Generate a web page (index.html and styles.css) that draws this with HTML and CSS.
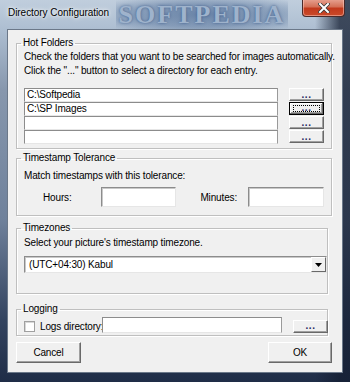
FILE: index.html
```html
<!DOCTYPE html>
<html lang="en">
<head>
  <meta charset="UTF-8">
  <title>Directory Configuration</title>
  <link rel="stylesheet" href="styles.css">
</head>
<body>

  <div class="window">

    <!-- Title bar -->
    <div class="titlebar">
      <span class="title">Directory Configuration</span>
      <span class="watermark">SOFTPEDIA</span>
      <button class="close" aria-label="Close">
        <svg width="12" height="10" viewBox="0 0 12 10">
          <path d="M2 1 L10 9 M10 1 L2 9" stroke="#3a3a3a" stroke-width="3.6" stroke-linecap="square"/>
          <path d="M2 1 L10 9 M10 1 L2 9" stroke="#fff" stroke-width="2" stroke-linecap="square"/>
        </svg>
      </button>
    </div>

    <div class="client">

      <!-- Hot Folders -->
      <fieldset class="group hot">
        <legend>Hot Folders</legend>
        <p class="note">Check the folders that you want to be searched for images automatically.<br>Click the "..." button to select a directory for each entry.</p>
        <div class="folder-list">
          <div class="folder-row"><div class="field">C:\Softpedia</div><button class="browse">...</button></div>
          <div class="folder-row"><div class="field">C:\SP Images</div><button class="browse focused"><span>...</span></button></div>
          <div class="folder-row"><div class="field"></div><button class="browse">...</button></div>
          <div class="folder-row"><div class="field"></div><button class="browse">...</button></div>
        </div>
      </fieldset>

      <!-- Timestamp Tolerance -->
      <fieldset class="group tolerance">
        <legend>Timestamp Tolerance</legend>
        <p class="note">Match timestamps with this tolerance:</p>
        <div class="tolerance-row">
          <label class="hours-label">Hours:</label>
          <div class="field tall hours"></div>
          <label class="minutes-label">Minutes:</label>
          <div class="field tall minutes"></div>
        </div>
      </fieldset>

      <!-- Timezones -->
      <fieldset class="group narrow zones">
        <legend>Timezones</legend>
        <p class="note">Select your picture's timestamp timezone.</p>
        <div class="dropdown">
          <span class="dropdown-text">(UTC+04:30) Kabul</span>
          <span class="dropdown-arrow">
            <svg width="7" height="4" viewBox="0 0 7 4"><path d="M0 0 H7 L3.5 4 Z" fill="#000"/></svg>
          </span>
        </div>
      </fieldset>

      <!-- Logging -->
      <fieldset class="group narrow logging">
        <legend>Logging</legend>
        <div class="logging-row">
          <span class="checkbox"></span>
          <label class="logs-label">Logs directory:</label>
          <div class="field logs"></div>
          <button class="browse">...</button>
        </div>
      </fieldset>

      <!-- Dialog buttons -->
      <div class="actions">
        <button class="btn cancel">Cancel</button>
        <button class="btn ok">OK</button>
      </div>

    </div>
  </div>

</body>
</html>
```

FILE: styles.css
```css
/* General */
body {
  margin: 0;
  padding: 0;
  font-family: "Liberation Sans", Arial, sans-serif;
  font-size: 10px;
  letter-spacing: -0.15px;
  color: #000;
  background: #1f2d47;
}

button {
  font-family: inherit;
  font-size: 10px;
  letter-spacing: inherit;
  padding: 0;
  cursor: default;
}

/* Window frame */
.window {
  width: 350px;
  height: 382px;
  box-sizing: border-box;
  padding: 0 7px 9px;
  display: flex;
  flex-direction: column;
  background:
    linear-gradient(to right, rgba(20, 30, 50, 0) 0, rgba(20, 30, 50, 0) 90%, rgba(20, 30, 50, 0.75) 97%),
    linear-gradient(to bottom, #c0cedd 0, #aebfd2 28px, #8797ad 90px, #6f819b 220px, #33435f 320px, #1f2d47 100%);
}

.titlebar {
  height: 29px;
  display: flex;
  align-items: flex-start;
}

.title {
  width: 108px;
  flex-shrink: 0;
  font-size: 10px;
  letter-spacing: -0.05px;
  margin-top: 7px;
  margin-left: 1px;
  color: #000;
  text-shadow: 0 0 6px #fff, 0 0 3px #fff;
  white-space: nowrap;
}

.watermark {
  width: 172px;
  flex-shrink: 0;
  overflow: hidden;
  font-family: "Liberation Serif", serif;
  font-weight: bold;
  font-size: 26px;
  letter-spacing: 2px;
  text-align: center;
  line-height: 29px;
  color: #9fb3cc;
  text-shadow: 0 0 3px #3d5d8c;
  background: radial-gradient(ellipse at center, rgba(55, 88, 135, 0.6) 0, rgba(55, 88, 135, 0.35) 60%, rgba(55, 88, 135, 0) 100%);
  white-space: nowrap;
}

.close {
  margin-left: auto;
  margin-right: -2px;
  margin-top: -1px;
  width: 43px;
  height: 18px;
  flex-shrink: 0;
  border: 1px solid #4a2a2a;
  border-top: none;
  border-radius: 0 0 4px 4px;
  background: linear-gradient(to bottom, #e8a493 0, #d47158 45%, #c2391c 55%, #c94a2a 100%);
  box-shadow: inset 0 0 0 1px rgba(255, 210, 200, 0.5);
  display: flex;
  align-items: center;
  justify-content: center;
}

/* Client area */
.client {
  flex: 1;
  background: #f0f0f0;
  border: 1px solid #6b7889;
  padding: 0 8px;
  display: flex;
  flex-direction: column;
}

/* Group boxes */
.group {
  margin: 0;
  padding: 0 7px;
  min-width: 0;
  width: 316px;
  box-sizing: border-box;
  border: 1px solid #bfbfbf;
  box-shadow: 1px 1px 0 #fff, inset 1px 1px 0 #fff;
}

.group legend {
  margin-left: -3px;
  padding: 0 2px;
  line-height: 14px;
}

.group.narrow {
  width: 312px;
  padding-right: 0;
}

.note {
  margin: 0;
  line-height: 14px;
  white-space: nowrap;
}

.hot {
  margin-top: 6px;
  padding-bottom: 4px;
}

.tolerance {
  margin-top: 2px;
  padding-bottom: 8px;
}

.tolerance .note {
  margin-top: 4px;
}

.zones {
  margin-top: 5px;
  padding-bottom: 20px;
}

.zones .note {
  margin-top: 1px;
}

.logging {
  margin-top: 8px;
  padding-bottom: 2px;
}

/* Text fields */
.field {
  box-sizing: border-box;
  height: 14px;
  background: #fff;
  border: 1px solid #8c8c8c;
  border-right-color: #9a9a9a;
  border-bottom-color: #e6e6e6;
  padding-left: 2px;
  line-height: 12px;
  white-space: nowrap;
}

.field.tall {
  height: 20px;
  border-color: #8c8c8c #e6e6e6 #e6e6e6 #8c8c8c;
  box-shadow: inset 1px 1px 0 #c8c8c8;
}

/* Hot folder rows */
.folder-list {
  margin-top: 10px;
}

.folder-row {
  display: flex;
  align-items: flex-start;
  height: 14px;
}

.folder-row .field {
  width: 258px;
}

.browse {
  margin-left: 11px;
  width: 35px;
  height: 13px;
  flex-shrink: 0;
  box-sizing: border-box;
  background: #f0f0f0;
  border: 1px solid;
  border-color: #fff #696969 #696969 #fff;
  box-shadow: inset -1px -1px 0 #a0a0a0;
  color: #2a2a60;
  line-height: 8px;
  font-weight: bold;
  letter-spacing: 0.5px;
}

.browse.focused {
  border-color: #000;
  box-shadow: inset -1px -1px 0 #696969, inset 1px 1px 0 #fff, inset -2px -2px 0 #a0a0a0;
  padding: 2px 3px;
}

.browse.focused span {
  display: block;
  height: 100%;
  box-sizing: border-box;
  border: 1px dotted #000;
  line-height: 4px;
}

/* Tolerance row */
.tolerance-row {
  margin-top: 4px;
  display: flex;
  align-items: center;
}

.hours-label {
  margin-left: 19px;
  width: 59px;
}

.hours {
  width: 76px;
}

.minutes-label {
  margin-left: 24px;
  width: 48px;
}

.minutes {
  width: 77px;
}

/* Timezone dropdown */
.dropdown {
  margin-top: 6px;
  height: 17px;
  box-sizing: border-box;
  background: #fff;
  border: 1px solid #8c8c8c;
  border-right-color: #e6e6e6;
  border-bottom-color: #e6e6e6;
  box-shadow: inset 1px 1px 0 #c8c8c8;
  display: flex;
  align-items: center;
  justify-content: space-between;
}

.dropdown-text {
  padding-left: 4px;
}

.dropdown-arrow {
  width: 15px;
  height: 15px;
  box-sizing: border-box;
  background: #f0f0f0;
  border: 1px solid;
  border-color: #fff #696969 #696969 #fff;
  display: flex;
  align-items: center;
  justify-content: center;
}

/* Logging row */
.logging-row {
  margin-top: 1px;
  display: flex;
  align-items: center;
  height: 16px;
}

.checkbox {
  width: 11px;
  height: 11px;
  flex-shrink: 0;
  box-sizing: border-box;
  background: #fff;
  border: 1px solid #a0a0a0;
  box-shadow: inset 1px 1px 0 #d8d8d8;
  margin-top: 3px;
}

.logs-label {
  margin-left: 5px;
  width: 62px;
  flex-shrink: 0;
  margin-top: 2px;
  white-space: nowrap;
}

.field.logs {
  width: 180px;
  height: 16px;
  flex-shrink: 0;
}

.logging-row .browse {
  margin-left: 11px;
  margin-top: 2px;
}

/* Dialog buttons */
.actions {
  margin-top: 6px;
  display: flex;
  justify-content: space-between;
}

.btn {
  height: 21px;
  box-sizing: border-box;
  background: #f0f0f0;
  border: 1px solid;
  border-color: #fff #696969 #696969 #fff;
  box-shadow: inset -1px -1px 0 #a0a0a0;
}

.cancel {
  width: 65px;
}

.ok {
  width: 64px;
  margin-right: 2px;
}
```
